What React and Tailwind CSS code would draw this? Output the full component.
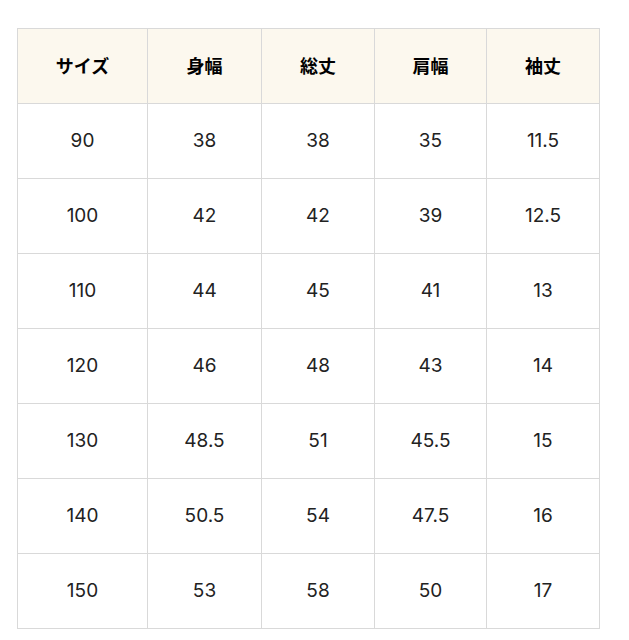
const headers = ["サイズ", "身幅", "総丈", "肩幅", "袖丈"];

const rows = [
  ["90", "38", "38", "35", "11.5"],
  ["100", "42", "42", "39", "12.5"],
  ["110", "44", "45", "41", "13"],
  ["120", "46", "48", "43", "14"],
  ["130", "48.5", "51", "45.5", "15"],
  ["140", "50.5", "54", "47.5", "16"],
  ["150", "53", "58", "50", "17"],
];

const widths = ["w-[130px]", "w-[114px]", "w-[113px]", "w-[112px]", "w-[113px]"];

export default function App() {
  return (
    <div
      className="min-h-[640px] bg-white pt-[28px] pl-[17px]"
      style={{ fontFamily: 'Inter, "Noto Sans CJK JP", sans-serif' }}
    >
      <table className="border-collapse table-fixed w-[583px] text-[#222]">
        <thead>
          <tr className="h-[75px] bg-[#fcf8ee]">
            {headers.map((h, i) => (
              <th
                key={h}
                className={`${widths[i]} border border-[#d9d9d9] text-[18px] font-bold text-black text-center`}
              >
                {h}
              </th>
            ))}
          </tr>
        </thead>
        <tbody>
          {rows.map((r) => (
            <tr key={r[0]} className="h-[75px]">
              {r.map((c, i) => (
                <td
                  key={i}
                  className="border border-[#d9d9d9] text-[19px] font-normal text-center"
                >
                  {c}
                </td>
              ))}
            </tr>
          ))}
        </tbody>
      </table>
    </div>
  );
}
